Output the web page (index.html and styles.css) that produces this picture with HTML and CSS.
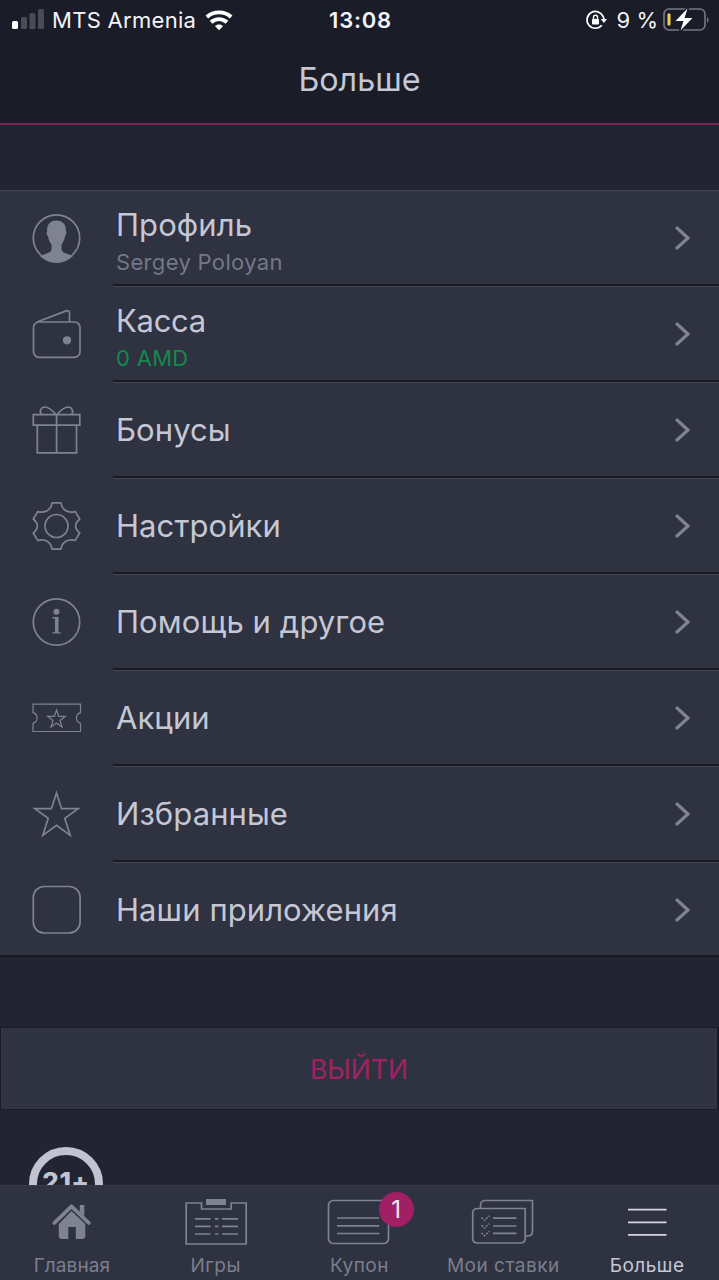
FILE: index.html
```html
<!DOCTYPE html>
<html lang="ru">
<head>
<meta charset="utf-8">
<title>Больше</title>
<link rel="stylesheet" href="styles.css">
</head>
<body>
<div class="app">
  <header class="top">
    <div class="status">
      <div class="status-left">
        <svg width="32" height="22" viewBox="0 0 32 22"><g fill="#4a4b58"><rect x="9" y="8" width="6" height="12" rx="1.5"/><rect x="17.500" y="4" width="6" height="16" rx="1.500"/><rect x="26" y="0" width="6" height="20" rx="1.500"/></g><rect x="0" y="12" width="6" height="8" rx="1.500" fill="#fff"/></svg>
        <span class="carrier">MTS Armenia</span>
        <svg class="wifi" width="28" height="21" viewBox="0 0 30 22" fill="none" stroke="#fff" stroke-width="4.200"><path d="M2 7.200C9.400.7 20.600.7 28 7.200"/><path d="M6.500 12.800c4.900-4.400 12.100-4.400 17 0"/><path d="M10.600 17c2.500-2.300 6.300-2.300 8.800 0L15 21.500z" fill="#fff" stroke="none"/></svg>
      </div>
      <div class="clock">13:08</div>
      <div class="status-right">
        <svg width="21" height="20" viewBox="0 0 21 20" fill="none" stroke="#fff" stroke-width="1.700"><path d="M17.300 7A8.400 8.400 0 1 0 15.800 15.300"/><path d="M17.300 7c.6 1.200.7 2 .6 3"/><path d="M14.800 9h6.200l-3.100 4z" fill="#fff" stroke="none"/><rect x="6" y="9" width="7" height="5.500" rx=".8" fill="#fff" stroke="none"/><path d="M7.500 9V7.300a2 2 0 0 1 4 0V9" stroke-width="1.400"/></svg>
        <span class="percent">9 %</span>
        <svg class="battery" width="46" height="26" viewBox="0 0 46 26" fill="none"><rect x="1" y="2" width="41" height="21" rx="5" stroke="#777985" stroke-width="1.600"/><path d="M44 10c2 1 2 5 0 6" fill="#777985"/><rect x="4.500" y="6.500" width="3" height="12" rx="1" fill="#f3cf4b"/><path d="M24.500 1.500 12.500 14h8L17.500 23.500 29.500 11h-8z" fill="#fff" stroke="#1a1c28" stroke-width="3" paint-order="stroke" stroke-linejoin="round"/></svg>
      </div>
    </div>
    <h1 class="title">Больше</h1>
  </header>

  <main class="content">
    <nav class="menu">
      <a class="row double">
        <svg class="icon" viewBox="0 0 56 56"><circle cx="28.500" cy="28" r="23.200"/><path class="solid" d="M28.500 10.500c-6 0-9.800 3.800-9.300 10.500-1.100.8-.4 4.500.9 5.300.5 4 1.800 6.200 3.400 8.200v5.600c-1 3.100-8.300 4.400-11.400 6.100a23.400 23.400 0 0 0 32.800 0c-3.100-1.700-10.400-3-11.400-6.100v-5.600c1.600-2 2.900-4.200 3.400-8.200 1.300-.8 2-4.500.9-5.300.5-6.700-3.300-10.500-9.300-10.500z"/></svg>
        <div class="cell"><div class="labels"><span class="label">Профиль</span><span class="sub">Sergey Poloyan</span></div><svg class="chevron" viewBox="0 0 18 26"><path d="M3 3 14 13 3 23"/></svg></div>
      </a>
      <a class="row double">
        <svg class="icon" viewBox="0 0 56 56"><rect x="5.500" y="16" width="46.500" height="35.300" rx="5.500"/><path d="M9 16 38.200 4.900c1.900-.6 3.300.1 3.300 2V16"/><circle class="solid" cx="39" cy="34.300" r="4.100"/></svg>
        <div class="cell"><div class="labels"><span class="label cash">Касса</span><span class="sub money">0 AMD</span></div><svg class="chevron" viewBox="0 0 18 26"><path d="M3 3 14 13 3 23"/></svg></div>
      </a>
      <a class="row">
        <svg class="icon" viewBox="0 0 56 56"><path d="M5.300 12.700h46.500v10.400H5.300zM9.300 23.100h39.200v27.800H9.300zM28.600 12.700v38.200M28 12.500C23.500 7.500 20.500 5 17 5c-4 0-6 4.500-3.600 7.500M29 12.500C33.500 7.500 36.500 5 40 5c4 0 6 4.500 3.600 7.500"/></svg>
        <div class="cell"><div class="labels"><span class="label">Бонусы</span></div><svg class="chevron" viewBox="0 0 18 26"><path d="M3 3 14 13 3 23"/></svg></div>
      </a>
      <a class="row">
        <svg class="icon" viewBox="0 0 56 56"><circle cx="28.500" cy="28" r="11.500"/><path d="M24 4.800h9c.8 7 6.500 10.800 14.300 8.800l4.400 7.400c-5.500 5-5.500 9 0 14l-4.400 7.400c-7.800-2-13.500 1.800-14.300 8.800h-9c-.8-7-6.500-10.800-14.300-8.800L5.300 35c5.500-5 5.500-9 0-14l4.400-7.400C17.500 15.600 23.200 11.800 24 4.800z" stroke-linejoin="round"/></svg>
        <div class="cell"><div class="labels"><span class="label">Настройки</span></div><svg class="chevron" viewBox="0 0 18 26"><path d="M3 3 14 13 3 23"/></svg></div>
      </a>
      <a class="row">
        <svg class="icon" viewBox="0 0 56 56"><circle cx="28.500" cy="28" r="23.200"/><circle class="solid" cx="28.500" cy="17.800" r="3"/><path class="solid" d="M24.500 23h6v15.200h2.300v1.300h-8.300v-1.300h2.500V24.400h-2.500z"/></svg>
        <div class="cell"><div class="labels"><span class="label">Помощь и другое</span></div><svg class="chevron" viewBox="0 0 18 26"><path d="M3 3 14 13 3 23"/></svg></div>
      </a>
      <a class="row">
        <svg class="icon" viewBox="0 0 56 56"><g stroke-width="1.200"><path d="M5 14.200h47.500v8.500a5.500 5.500 0 0 0 0 10.600v8.200H5v-8.200a5.500 5.500 0 0 0 0-10.600z"/><path d="m28.500 20 2.200 6.300h6.700L32 30.400l2 6.500-5.500-3.900-5.500 3.900 2-6.500-5.400-4.100h6.700z"/></g></svg>
        <div class="cell"><div class="labels"><span class="label">Акции</span></div><svg class="chevron" viewBox="0 0 18 26"><path d="M3 3 14 13 3 23"/></svg></div>
      </a>
      <a class="row">
        <svg class="icon" viewBox="0 0 56 56"><path d="m28.500 7 5.100 15.700h16.600L36.800 32.400l5.400 17-13.700-10-13.700 10 5.400-17L6.800 22.700h16.600z"/></svg>
        <div class="cell"><div class="labels"><span class="label">Избранные</span></div><svg class="chevron" viewBox="0 0 18 26"><path d="M3 3 14 13 3 23"/></svg></div>
      </a>
      <a class="row">
        <svg class="icon" viewBox="0 0 56 56"><rect x="5.300" y="4.500" width="46.800" height="46.500" rx="11"/></svg>
        <div class="cell"><div class="labels"><span class="label">Наши приложения</span></div><svg class="chevron" viewBox="0 0 18 26"><path d="M3 3 14 13 3 23"/></svg></div>
      </a>
    </nav>
    <button class="logout"><span>ВЫЙТИ</span></button>
    <div class="age"><span>21+</span></div>
  </main>

  <footer class="tabs">
    <a class="tab home">
      <svg viewBox="0 0 64 56"><path d="m14.300 37 17.200-16.700L48.800 37" stroke-width="3.800" stroke-linecap="round" stroke-linejoin="round"/><path class="solid" d="M39.800 19h4.500v11l-4.500-4zM31.500 25 45.300 38v12q0 3-3 3h-6.500V41h-7.500v12h-6.500q-3 0-3-3V38z"/></svg>
      <span>Главная</span>
    </a>
    <a class="tab">
      <svg viewBox="0 0 64 56"><path d="M17.500 17H2.200v41h60V17H47.200v6H17.500z"/><path class="solid" d="M22 13h20v6H22z"/><path d="M11 32.800h15.500m4.500 0h3.500m3.500 0h16M11 40.300h15.500m4.500 0h3.500m3.500 0h16M11 48h15.500m4.500 0h3.500m3.500 0h16"/></svg>
      <span>Игры</span>
    </a>
    <a class="tab">
      <svg viewBox="0 0 64 56"><rect x="1.500" y="14.500" width="60" height="43" rx="5"/><path d="M10 32h42.300M10 39.800h42.300M10 47.500h42.300"/></svg>
      <span class="badge">1</span>
      <span>Купон</span>
    </a>
    <a class="tab">
      <svg viewBox="0 0 64 56"><path d="M1.700 27.500q0-5 5-5h47.500V52q0 5-5 5H6.700q-5 0-5-5zM9.500 22v-2.500q0-5 5-5h47V45q0 5-5 5H54M22 32.200h23.500M22 40h23.500M22 47.400h23.500"/><path d="m10.500 31.500 3 2.800 5-4.500m-8 9.500 3 2.800 5-4.500m-8 9.300 3 2.800 5-4.500" stroke-dasharray="2 1.200" stroke-width="1.500"/></svg>
      <span>Мои ставки</span>
    </a>
    <a class="tab active">
      <svg viewBox="0 0 64 56"><path d="M13 23.700h38.500M13 36.300h38.500M13 48.800h38.500"/></svg>
      <span>Больше</span>
    </a>
  </footer>
</div>
</body>
</html>
```
FILE: styles.css
```css
* { box-sizing: border-box; }
body { margin: 0; background: #222432; font-family: Inter, "Liberation Sans", sans-serif; color: #c5c7d5; }
svg { display: block; flex: none; overflow: visible; }
.app { width: 719px; height: 1280px; overflow: hidden; display: flex; flex-direction: column; }

.top { height: 125px; flex: none; background: #1a1c28; border-bottom: 2px solid #802558; }
.status { height: 40px; display: grid; grid-template-columns: 1fr auto 1fr; align-items: center; color: #f4f4f8; padding: 0 10px 0 12px; }
.status-left, .status-right { display: flex; align-items: center; }
.status-right { justify-content: flex-end; }
.carrier { font-size: 22px; letter-spacing: .3px; margin-left: 8px; }
.wifi { margin-left: 9px; }
.clock { font-size: 22px; font-weight: 600; letter-spacing: .8px; }
.percent { font-size: 22px; margin: 0 5px 0 10px; white-space: nowrap; }
.title { margin: 19px 0 0; text-align: center; font-size: 32.3px; line-height: 42px; font-weight: 400; }

.content { flex: 1; min-height: 0; overflow: hidden; padding-top: 65px; }
.menu { border-top: 1px solid #424450; border-bottom: 2px solid #181a23; background: #2f3240; height: 767px; }
.row { display: flex; height: 96px; padding-left: 28px; }
.row:last-child { height: 94px; }
.icon { width: 56px; height: 56px; margin-top: 19px; fill: none; stroke: #7e8292; stroke-width: 1.7; }
.solid { fill: #7e8292; stroke: none; }
.cell { flex: 1; margin-left: 29px; padding: 2px 27px 2px 3px; display: flex; align-items: center; justify-content: space-between; border-bottom: 2px solid #181a22; box-shadow: 0 1px 0 #444651; height: 95px; }
.row:last-child .cell { padding-top: 0; border: 0; box-shadow: none; }
.labels { display: flex; flex-direction: column; }
.double .labels { padding-top: 6px; }
.label { font-size: 31px; line-height: 40px; letter-spacing: .08px; white-space: nowrap; }
.cash { letter-spacing: -.3px; }
.sub { font-size: 22px; line-height: 28px; margin-top: 3px; color: #747887; letter-spacing: .33px; }
.money { color: #138a4b; letter-spacing: .3px; }
.chevron { width: 18px; height: 26px; fill: none; stroke: #7e8292; stroke-width: 3.2; stroke-linecap: round; }

.logout { display: block; width: 719px; height: 83px; margin: 70px 0 0; background: #2f3240; border: 1px solid #171923; border-right-width: 2px; box-shadow: inset 0 0 0 1px #343645; color: #a02263; font-family: inherit; font-size: 26.6px; padding: 0; }
.age { width: 74px; height: 74px; margin: 37px 0 0 29px; border: 8px solid #c1c3d0; border-radius: 50%; color: #c1c3d0; font-size: 26px; font-weight: 800; line-height: 30px; display: flex; justify-content: center; padding-top: 12px; letter-spacing: .5px; }

.tabs { height: 95px; flex: none; background: #2f3240; border-top: 1px solid #3a3c49; display: grid; grid-template-columns: repeat(5, 1fr); }
.tab { position: relative; display: flex; flex-direction: column; align-items: center; color: #7b7f8d; font-size: 19px; line-height: 24px; white-space: nowrap; letter-spacing: .5px; }
.home { letter-spacing: .1px; }
.tab svg { width: 64px; height: 56px; fill: none; stroke: #7e8292; stroke-width: 1.7; margin-bottom: 12px; }
.tab.active { color: #c5c7d5; }
.tab.active svg { stroke: #d3d5e0; }
.badge { position: absolute; left: 91px; top: 6px; width: 35px; height: 35px; border-radius: 50%; background: #a12065; color: #eee8f2; font-size: 24px; line-height: 35px; text-align: center; letter-spacing: 0; }
```
